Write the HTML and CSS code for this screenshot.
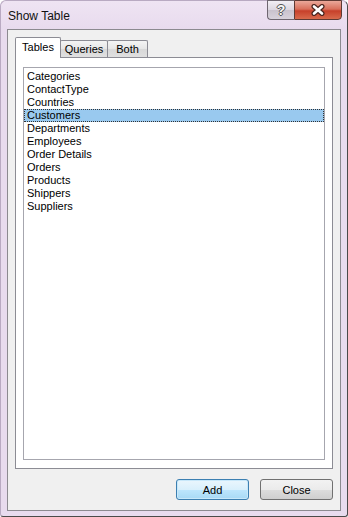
FILE: index.html
```html
<!DOCTYPE html>
<html lang="en">
<head>
    <meta charset="UTF-8" />
    <title>Show Table</title>
    <link rel="stylesheet" href="styles.css">
</head>
<body>
    <div class="window">
        <div class="titlebar">
            <span class="title">Show Table</span>
            <div class="controls">
                <span class="btn-help">?</span>
                <span class="btn-close">
                    <svg width="16" height="12" viewBox="0 0 16 12">
                        <path d="M4 2.5 L12 9.5 M12 2.5 L4 9.5" stroke="#4a2620" stroke-width="5" stroke-linecap="round"/>
                        <path d="M4 2.5 L12 9.5 M12 2.5 L4 9.5" stroke="#ffffff" stroke-width="2.6" stroke-linecap="round"/>
                    </svg>
                </span>
            </div>
        </div>
        <div class="client">
            <div class="tabs">
                <div class="tab active tab-tables">Tables</div>
                <div class="tab tab-queries">Queries</div>
                <div class="tab tab-both">Both</div>
            </div>
            <div class="panel">
                <ul class="list">
                    <li>Categories</li>
                    <li>ContactType</li>
                    <li>Countries</li>
                    <li class="selected">Customers</li>
                    <li>Departments</li>
                    <li>Employees</li>
                    <li>Order Details</li>
                    <li>Orders</li>
                    <li>Products</li>
                    <li>Shippers</li>
                    <li>Suppliers</li>
                </ul>
            </div>
            <div class="actions">
                <button class="btn default">Add</button>
                <button class="btn">Close</button>
            </div>
        </div>
    </div>
</body>
</html>
```

FILE: styles.css
```css
body {
    margin: 0;
    font-family: 'Liberation Sans', Arial, sans-serif;
    font-size: 11px;
    color: #000;
    background: #fff;
}

/* Окно диалога */
.window {
    width: 348px;
    height: 517px;
    box-sizing: border-box;
    background-color: #e8dbee;
    border: 1px solid #b9aac2;
    border-right-color: #4a4a4a;
    border-bottom-color: #4a4a4a;
    border-radius: 6px 6px 3px 3px;
    display: flex;
    flex-direction: column;
}

.titlebar {
    height: 28px;
    display: flex;
    justify-content: space-between;
    align-items: flex-start;
    background: linear-gradient(#efe4f3, #e8dbee);
    border-radius: 6px 6px 0 0;
}

.title {
    font-size: 12px;
    padding: 8px 0 0 7px;
    color: #111;
}

.controls {
    display: flex;
    margin-top: -1px;
    margin-right: 5px;
}

.btn-help {
    width: 27px;
    height: 20px;
    box-sizing: border-box;
    border: 1px solid #6e6670;
    border-right: none;
    border-radius: 0 0 0 4px;
    background: linear-gradient(#f2eef4, #dcd6e0 50%, #c9c2cd 51%, #d8d2dc);
    color: #f6f6f6;
    font-weight: bold;
    font-size: 14px;
    text-align: center;
    line-height: 19px;
    text-shadow: 1px 0 0 #555, -1px 0 0 #555, 0 1px 0 #555, 0 -1px 0 #555;
}

.btn-close {
    width: 48px;
    height: 20px;
    box-sizing: border-box;
    border: 1px solid #5e3a34;
    border-radius: 0 0 4px 0;
    background: linear-gradient(#eaa89a, #d8705c 45%, #c7402a 55%, #d86a4c);
    display: flex;
    justify-content: center;
    align-items: center;
}

.client {
    flex: 1;
    margin: 0 6px 5px 6px;
    border: 1px solid #8c8a90;
    background-color: #f0f0f0;
    padding: 7px 7px 9px 7px;
    display: flex;
    flex-direction: column;
}

.tabs {
    display: flex;
    align-items: flex-end;
    height: 20px;
}

.tab {
    height: 17px;
    box-sizing: border-box;
    padding-top: 2px;
    text-align: center;
    border: 1px solid #8c8c94;
    border-bottom: none;
    margin-right: -1px;
    background: linear-gradient(#f4f4f4, #e6e6e6 50%, #d8d8d8 51%, #e0e0e0);
    border-radius: 2px 2px 0 0;
}

.tab-tables {
    width: 46px;
}

.tab-queries {
    width: 48px;
}

.tab-both {
    width: 41px;
}

.tab.active {
    height: 21px;
    padding-top: 3px;
    background: #fff;
    position: relative;
    z-index: 1;
    margin-bottom: -1px;
}

.panel {
    height: 412px;
    box-sizing: border-box;
    border: 1px solid #8c8c94;
    background: #fff;
    padding: 9px 7px 8px 7px;
}

.list {
    list-style-type: none;
    margin: 0;
    height: 100%;
    box-sizing: border-box;
    border: 1px solid #a6a6ae;
    padding: 2px 0 0 0;
}

.list li {
    height: 13px;
    line-height: 13px;
    padding-left: 3px;
    box-sizing: border-box;
}

.list li.selected {
    background-color: #99c9ef;
    outline: 1px dotted #333;
    outline-offset: -1px;
}

.actions {
    display: flex;
    justify-content: flex-end;
    gap: 11px;
    margin-top: 10px;
}

.btn {
    width: 73px;
    height: 21px;
    font-family: 'Liberation Sans', Arial, sans-serif;
    font-size: 11px;
    border: 1px solid #707070;
    border-radius: 3px;
    background: linear-gradient(#f2f2f2, #ebebeb 50%, #dddddd 51%, #cfcfcf);
    padding: 0;
    color: #000;
}

.btn.default {
    border-color: #3c7fb1;
    background: linear-gradient(#eaf6fd, #d9f0fc 50%, #bee6fd 51%, #a7d9f5);
    box-shadow: inset 0 0 0 1px #c8e8fa;
}
```
